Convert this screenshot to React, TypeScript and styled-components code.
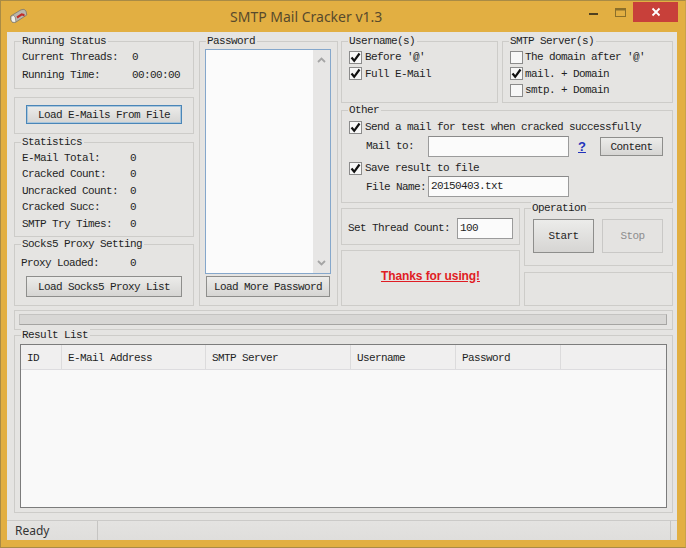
import React from "react";
import styled, { createGlobalStyle } from "styled-components";

const Global = createGlobalStyle`
  html, body { margin: 0; padding: 0; background: #fff; }
  * { box-sizing: border-box; }
`;

const Frame = styled.div`
  width: 686px;
  height: 548px;
  background: #e2af42;
  border: 1px solid #a98b45;
  border-right-color: #c9a24a;
  padding: 0 8px 7px 6px;
  display: flex;
  flex-direction: column;
  font-family: "Liberation Mono", monospace;
  font-size: 11px;
  letter-spacing: -0.6px;
  color: #1f1f1f;
  overflow: hidden;
`;

const TitleBar = styled.div`
  height: 31px;
  flex: none;
  display: flex;
  align-items: flex-start;
`;

const AppIcon = styled.svg`
  width: 18px;
  height: 16px;
  margin: 7px 0 0 3px;
  flex: none;
`;

const Title = styled.div`
  margin: 6px 0 0 202px;
  font-family: "Noto Sans", sans-serif;
  font-size: 14px;
  line-height: 20px;
  letter-spacing: 0;
  color: #584a2c;
  white-space: nowrap;
`;

const WindowButtons = styled.div`
  margin-left: auto;
  margin-top: 1px;
  display: flex;
  margin-right: -1px;
`;

const WinButton = styled.div<{ $w: number; $bg?: string }>`
  width: ${(p) => p.$w}px;
  height: 20px;
  background: ${(p) => p.$bg || "transparent"};
  display: flex;
  align-items: center;
  justify-content: center;
`;

const Client = styled.div`
  flex: 1;
  min-height: 0;
  background: #e5e4e2;
  padding: 9px 4px 0 7px;
  display: flex;
  flex-direction: column;
`;

const Top = styled.div`
  height: 265px;
  flex: none;
  display: flex;
`;

const Column = styled.div<{ $w: number; $ml?: number }>`
  width: ${(p) => p.$w}px;
  margin-left: ${(p) => p.$ml || 0}px;
  display: flex;
  flex-direction: column;
  flex: none;
`;

const Group = styled.div<{
  $h: number;
  $w?: number;
  $mt?: number;
  $ml?: number;
  $pt?: number;
  $pl?: number;
  $pr?: number;
}>`
  position: relative;
  flex: none;
  height: ${(p) => p.$h}px;
  ${(p) => (p.$w ? `width: ${p.$w}px;` : "")}
  margin-top: ${(p) => p.$mt || 0}px;
  margin-left: ${(p) => p.$ml || 0}px;
  padding: ${(p) => p.$pt || 0}px ${(p) => p.$pr || 0}px 0 ${(p) => p.$pl || 0}px;
  border: 1px solid #cdccc9;
`;

const Legend = styled.span`
  position: absolute;
  top: -7px;
  left: 6px;
  padding: 0 2px 0 1px;
  background: #e5e4e2;
  line-height: 12px;
  white-space: nowrap;
`;

const StatRow = styled.div<{ $col: number; $h: number }>`
  display: grid;
  grid-template-columns: ${(p) => p.$col}px 1fr;
  height: ${(p) => p.$h}px;
  padding-top: 1px;
  align-items: center;
  white-space: nowrap;
`;

const Button = styled.div<{ $w: number; $h: number; $mt?: number; $ml?: number; $focus?: boolean; $off?: boolean }>`
  width: ${(p) => p.$w}px;
  height: ${(p) => p.$h}px;
  margin-top: ${(p) => p.$mt || 0}px;
  margin-left: ${(p) => p.$ml || 0}px;
  flex: none;
  display: flex;
  align-items: center;
  justify-content: center;
  white-space: nowrap;
  color: ${(p) => (p.$off ? "#8d8d8d" : "#1f1f1f")};
  background: ${(p) => (p.$off ? "#e4e3e1" : "linear-gradient(#ececea, #d6d5d3)")};
  border: 1px solid ${(p) => (p.$focus ? "#4a86b8" : p.$off ? "#c9c8c6" : "#8e8e8c")};
  ${(p) => (p.$focus ? "box-shadow: inset 0 0 0 1px #a9c6dc;" : "")}
`;

const ListBox = styled.div`
  width: 126px;
  height: 225px;
  border: 1px solid #85a7cb;
  background: #fbfbfb;
  display: flex;
  justify-content: flex-end;
`;

const ScrollTrack = styled.div`
  width: 17px;
  background: #e7e6e5;
  display: flex;
  flex-direction: column;
  justify-content: space-between;
  align-items: center;
  padding: 7px 0;
`;

const Chevron = styled.svg`
  width: 9px;
  height: 6px;
`;

const CheckRow = styled.div<{ $h?: number; $gap?: number }>`
  display: flex;
  align-items: center;
  height: ${(p) => p.$h || 16.5}px;
  gap: ${(p) => p.$gap ?? 3}px;
  white-space: nowrap;
`;

const Box = styled.span`
  width: 13px;
  height: 13px;
  flex: none;
  background: #f7f7f7;
  border: 1px solid #8b8b8b;
  display: flex;
  align-items: center;
  justify-content: center;
`;

const Row = styled.div<{ $mt?: number }>`
  display: flex;
  margin-top: ${(p) => p.$mt || 0}px;
`;

const FieldRow = styled.div<{ $mt?: number }>`
  display: flex;
  align-items: center;
  padding-left: 17px;
  margin-top: ${(p) => p.$mt || 0}px;
  white-space: nowrap;
`;

const FieldLabel = styled.span<{ $w: number; $up?: number }>`
  width: ${(p) => p.$w}px;
  flex: none;
  margin-bottom: ${(p) => p.$up || 0}px;
`;

const TextField = styled.div<{ $w: number }>`
  width: ${(p) => p.$w}px;
  height: 21px;
  flex: none;
  background: #fbfbfb;
  border: 1px solid #9b9b9b;
  border-top-color: #8a8a8a;
  padding-left: 2px;
  line-height: 19px;
`;

const HelpLink = styled.span`
  margin-left: 9px;
  width: 7px;
  flex: none;
  font-family: "Liberation Sans", sans-serif;
  font-size: 13px;
  font-weight: 700;
  letter-spacing: 0;
  color: #2233bb;
  text-decoration: underline;
`;

const Thanks = styled.div`
  height: 100%;
  display: flex;
  align-items: center;
  justify-content: center;
  padding-bottom: 5px;
  font-family: "Liberation Sans", sans-serif;
  font-size: 12px;
  font-weight: 700;
  letter-spacing: -0.1px;
  color: #e01c24;
  text-decoration: underline;
`;

const Progress = styled.div`
  height: 11px;
  background: #d8d7d5;
  border: 1px solid #c4c3c1;
  border-bottom-color: #a5a4a2;
  border-right-color: #a9a8a6;
`;

const ListView = styled.div`
  height: 164px;
  background: #f9f9f9;
  border: 1px solid #7c7c7c;
`;

const ListHeader = styled.div`
  height: 25px;
  display: flex;
  background: #f0efef;
  border-bottom: 1px solid #dddcdf;
`;

const HeaderCell = styled.div<{ $w: number }>`
  width: ${(p) => p.$w}px;
  flex: none;
  padding: 2px 0 0 6px;
  display: flex;
  align-items: center;
  white-space: nowrap;
  border-right: 1px solid #dcdbdc;
`;

const StatusBar = styled.div`
  height: 20px;
  flex: none;
  margin: 7px -4px 0 -7px;
  padding-right: 6px;
  display: flex;
  justify-content: space-between;
  background: linear-gradient(#e4e3e1, #dfdedc);
  border-top: 1px solid #cbcac8;
  font-family: "Noto Sans", sans-serif;
  font-size: 12px;
  letter-spacing: 0;
  color: #333;
`;

const StatusPane = styled.div<{ $w: number }>`
  width: ${(p) => p.$w}px;
  padding-left: 8px;
  line-height: 20px;
  border-right: 1px solid #c6c5c3;
  flex: none;
`;

const Check = () => (
  <svg width="11" height="11" viewBox="0 0 11 11">
    <path d="M1.5 5.5 L4.2 8.8 L9.5 1.5" fill="none" stroke="#111" strokeWidth="2.2" />
  </svg>
);

const CheckItem = ({ on, label, h, gap }: { on: boolean; label: string; h?: number; gap?: number }) => (
  <CheckRow $h={h} $gap={gap}>
    <Box>{on && <Check />}</Box>
    <span>{label}</span>
  </CheckRow>
);

const Stat = ({ label, value, col, h }: { label: string; value: string; col: number; h: number }) => (
  <StatRow $col={col} $h={h}>
    <span>{label}</span>
    <span>{value}</span>
  </StatRow>
);

const columns: [string, number][] = [
  ["ID", 41],
  ["E-Mail Address", 144],
  ["SMTP Server", 145],
  ["Username", 105],
  ["Password", 105],
];

export default function App() {
  return (
    <Frame>
      <Global />
      <TitleBar>
        <AppIcon viewBox="0 0 18 16">
          <path d="M0.8 8 L11 1.8 Q14.5 0.2 16 3 L16.8 7 L6 14 Q2 15.5 1 12 Z" fill="#b9b6ae" stroke="#7d7768" strokeWidth="0.8" />
          <path d="M1 8.2 Q4 6.4 5.2 9 L6 14 Q2 15.5 1 12 Z" fill="#f1f0ec" stroke="#7d7768" strokeWidth="0.7" />
          <path d="M6.5 8.5 L11.5 5.2 L14.5 6 L14.5 8.6 L12 7.6 L7.5 10.4 Z" fill="#c22a26" />
        </AppIcon>
        <Title>SMTP Mail Cracker v1.3</Title>
        <WindowButtons>
          <WinButton $w={27}>
            <svg width="9" height="9" viewBox="0 0 9 9">
              <rect x="0" y="5" width="9" height="2" fill="#4f4020" />
            </svg>
          </WinButton>
          <WinButton $w={26}>
            <svg width="11" height="9" viewBox="0 0 11 9">
              <rect x="0.5" y="0.5" width="10" height="8" fill="none" stroke="#8a6f2a" />
              <rect x="0.5" y="0.5" width="10" height="2" fill="#8a6f2a" />
            </svg>
          </WinButton>
          <WinButton $w={45} $bg="#c8403a">
            <svg width="10" height="10" viewBox="0 0 10 10">
              <path d="M1.5 1.5 L8.5 8.5 M8.5 1.5 L1.5 8.5" stroke="#fff" strokeWidth="1.8" />
            </svg>
          </WinButton>
        </WindowButtons>
      </TitleBar>
      <Client>
        <Top>
          <Column $w={180}>
            <Group $h={48} $pt={6} $pl={7}>
              <Legend>Running Status</Legend>
              <Stat label="Current Threads:" value="0" col={110} h={16} />
              <Stat label="Running Time:" value="00:00:00" col={110} h={20} />
            </Group>
            <Group $h={37} $mt={8} $pt={7} $pl={11}>
              <Button $w={156} $h={19} $focus>Load E-Mails From File</Button>
            </Group>
            <Group $h={95} $mt={8} $pt={6} $pl={7}>
              <Legend>Statistics</Legend>
              <Stat label="E-Mail Total:" value="0" col={108} h={16.5} />
              <Stat label="Cracked Count:" value="0" col={108} h={16.5} />
              <Stat label="Uncracked Count:" value="0" col={108} h={16.5} />
              <Stat label="Cracked Succ:" value="0" col={108} h={16.5} />
              <Stat label="SMTP Try Times:" value="0" col={108} h={16.5} />
            </Group>
            <Group $h={62} $mt={7} $pt={9} $pl={6}>
              <Legend>Socks5 Proxy Setting</Legend>
              <Stat label="Proxy Loaded:" value="0" col={109} h={16} />
              <Button $w={156} $h={21} $mt={6} $ml={5}>Load Socks5 Proxy List</Button>
            </Group>
          </Column>
          <Group $h={265} $w={139} $ml={5} $pt={7} $pl={5}>
            <Legend>Password</Legend>
            <ListBox>
              <ScrollTrack>
                <Chevron viewBox="0 0 9 6">
                  <path d="M1 5 L4.5 1.5 L8 5" fill="none" stroke="#a5a5a5" strokeWidth="1.8" />
                </Chevron>
                <Chevron viewBox="0 0 9 6">
                  <path d="M1 1 L4.5 4.5 L8 1" fill="none" stroke="#a5a5a5" strokeWidth="1.8" />
                </Chevron>
              </ScrollTrack>
            </ListBox>
            <Button $w={124} $h={21} $mt={2} $ml={1}>Load More Password</Button>
          </Group>
          <Column $w={332} $ml={3}>
            <Row>
              <Group $h={62} $w={157} $pt={7} $pl={7}>
                <Legend>Username(s)</Legend>
                <CheckItem on label="Before '@'" />
                <CheckItem on label="Full E-Mail" />
              </Group>
              <Group $h={62} $w={171} $ml={4} $pt={7} $pl={7}>
                <Legend>SMTP Server(s)</Legend>
                <CheckItem on={false} label="The domain after '@'" gap={2} />
                <CheckItem on label="mail. + Domain" gap={2} />
                <CheckItem on={false} label="smtp. + Domain" gap={2} />
              </Group>
            </Row>
            <Group $h={93} $mt={7} $pt={8} $pl={7}>
              <Legend>Other</Legend>
              <CheckItem on label="Send a mail for test when cracked successfully" h={16} />
              <FieldRow $mt={1}>
                <FieldLabel $w={62} $up={2}>Mail to:</FieldLabel>
                <TextField $w={141} />
                <HelpLink>?</HelpLink>
                <Button $w={63} $h={19} $ml={15}>Content</Button>
              </FieldRow>
              <Row $mt={3}>
                <CheckItem on label="Save result to file" h={16} />
              </Row>
              <FieldRow>
                <FieldLabel $w={62}>File Name:</FieldLabel>
                <TextField $w={141}>20150403.txt</TextField>
              </FieldRow>
            </Group>
            <Row $mt={5}>
              <Column $w={179}>
                <Group $h={37} $pt={9} $pl={6}>
                  <CheckRow $h={21} $gap={0}>
                    <FieldLabel $w={109} $up={2}>Set Thread Count:</FieldLabel>
                    <TextField $w={56}>100</TextField>
                  </CheckRow>
                </Group>
                <Group $h={56} $mt={5}>
                  <Thanks>Thanks for using!</Thanks>
                </Group>
              </Column>
              <Column $w={149} $ml={4}>
                <Group $h={58} $pt={10} $pl={8}>
                  <Legend>Operation</Legend>
                  <Row>
                    <Button $w={61} $h={34}>Start</Button>
                    <Button $w={61} $h={34} $ml={8} $off>Stop</Button>
                  </Row>
                </Group>
                <Group $h={34} $mt={6} />
              </Column>
            </Row>
          </Column>
        </Top>
        <Group $h={20} $mt={4} $pt={3} $pl={4} $pr={5}>
          <Progress />
        </Group>
        <Group $h={178} $mt={5} $pt={8} $pl={5} $pr={5}>
          <Legend>Result List</Legend>
          <ListView>
            <ListHeader>
              {columns.map(([name, w]) => (
                <HeaderCell key={name} $w={w}>{name}</HeaderCell>
              ))}
            </ListHeader>
          </ListView>
        </Group>
        <StatusBar>
          <StatusPane $w={91}>Ready</StatusPane>
          <StatusPane $w={1} />
        </StatusBar>
      </Client>
    </Frame>
  );
}
